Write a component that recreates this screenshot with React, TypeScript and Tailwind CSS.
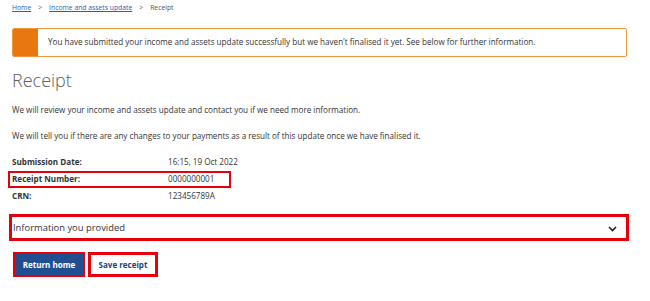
import React from "react";

export default function App() {
  const font = { fontFamily: '"Open Sans", "Noto Sans", sans-serif' };
  return (
    <div className="w-[650px] h-[301px] bg-white overflow-hidden text-[#333]" style={font}>
      <div className="pl-[12px] pt-[3px] flex items-center h-[14px] text-[6.8px]">
        <a className="text-[#2b5fb4] underline">Home</a>
        <span className="mx-[7px] text-[#555]">&gt;</span>
        <a className="text-[#2b5fb4] underline">Income and assets update</a>
        <span className="mx-[7px] text-[#555]">&gt;</span>
        <span className="text-[#555]">Receipt</span>
      </div>
      <div className="ml-[12px] mt-[14px] w-[615px] h-[29px] flex border border-[#f0973e] rounded-[2px] overflow-hidden">
        <div className="w-[25px] bg-[#e8770f]" />
        <div className="flex items-center pl-[10px] text-[8.1px] text-[#333]">
          You have submitted your income and assets update successfully but we haven't finalised it yet. See below for further information.
        </div>
      </div>
      <h1 className="ml-[12px] mt-[11px] text-[18px] leading-[24px] font-light text-[#5e5e5e]">Receipt</h1>
      <p className="ml-[12px] mt-[12px] text-[8.1px] leading-[12px]">
        We will review your income and assets update and contact you if we need more information.
      </p>
      <p className="ml-[12px] mt-[14px] text-[8.1px] leading-[12px]">
        We will tell you if there are any changes to your payments as a result of this update once we have finalised it.
      </p>
      <div className="mt-[12px] text-[8.1px]">
        <div className="ml-[12px] flex h-[17px] items-center">
          <span className="w-[156px] font-bold">Submission Date:</span>
          <span>16:15, 19 Oct 2022</span>
        </div>
        <div className="ml-[8px] w-[223px] flex h-[17px] items-center border-2 border-[#e5000c] pl-[2px]">
          <span className="w-[156px] font-bold">Receipt Number:</span>
          <span>0000000001</span>
        </div>
        <div className="ml-[12px] flex h-[17px] items-center">
          <span className="w-[156px] font-bold">CRN:</span>
          <span>123456789A</span>
        </div>
      </div>
      <div className="ml-[9px] mt-[9px] w-[620px] h-[27px] border-[3px] border-[#e5000c] flex items-center justify-between pl-[1px] pr-[9px]">
        <span className="text-[9.4px] text-[#333] pt-[2px]">Information you provided</span>
        <svg width="9" height="6" viewBox="0 0 9 6" className="mt-[2px]">
          <path d="M1 1 L4.5 4.5 L8 1" fill="none" stroke="#222" strokeWidth="1.6" />
        </svg>
      </div>
      <div className="ml-[13px] mt-[11px] flex gap-[3px]">
        <div className="w-[72px] h-[25px] border-2 border-[#e5000c] bg-[#1f4f91] flex items-center justify-center text-white text-[8px] font-bold">
          Return home
        </div>
        <div className="w-[70px] h-[25px] border-[3px] border-[#e5000c] bg-white flex items-center justify-center text-[#1f3f7a] text-[8px] font-bold">
          Save receipt
        </div>
      </div>
    </div>
  );
}
